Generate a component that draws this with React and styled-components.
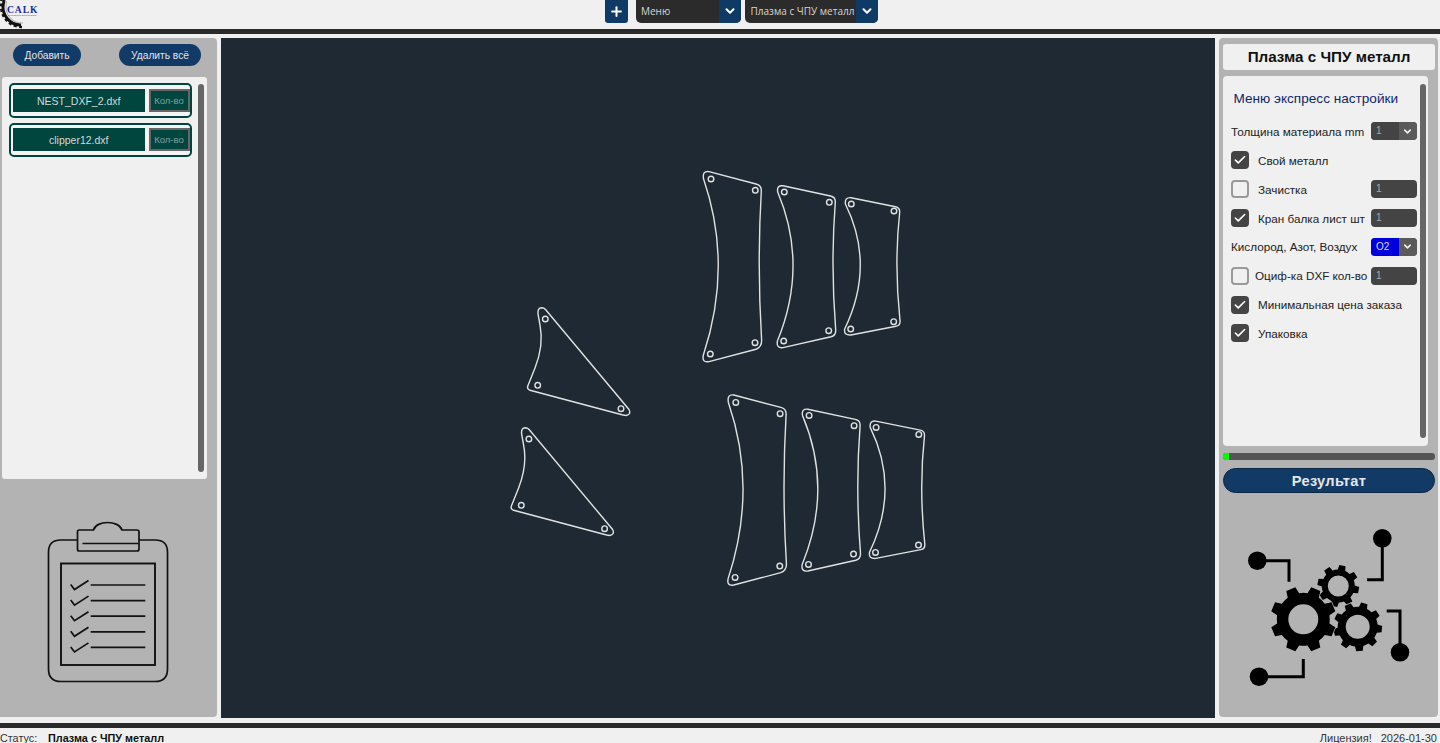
import React from "react";
import styled, { createGlobalStyle } from "styled-components";
import { Check, ChevronDown, Plus } from "lucide-react";

const Global = createGlobalStyle`
  html, body { margin: 0; padding: 0; background: #f0f0f0; }
  body { font-family: "Liberation Sans", Arial, sans-serif; overflow: hidden; }
  * { box-sizing: border-box; }
`;

const Page = styled.div`
  width: 1440px; height: 743px; overflow: hidden; display: flex; flex-direction: column; background: #f0f0f0;
`;
const Header = styled.header`
  position: relative; height: 29px; flex: none; display: flex; justify-content: center; gap: 7.5px; padding-left: 43px; background: #f0f0f0;
`;
const Rule = styled.div`
  height: 5px; flex: none; background: #2a2a2a;
`;
const LogoBox = styled.div`
  position: absolute; left: 0; top: 0; width: 44px; height: 29px;
`;
const PlusButton = styled.button`
  width: 23px; height: 22.5px; padding: 0; border: 0; border-radius: 0 0 3px 3px; background: #0f3a66; color: #fff; display: flex; align-items: center; justify-content: center;
`;
const TopGroup = styled.div`
  display: flex; gap: 4px;
`;
const TopSelect = styled.div`
  width: ${p => p.$w}px; height: 22.5px; display: flex; border-radius: 0 0 5px 5px; overflow: hidden; background: #2b2b2b; color: #d6d6d6; font: 10px "Open Sans", sans-serif;
`;
const TopValue = styled.div`
  flex: 1; min-width: 0; padding-left: 5.5px; line-height: 22px; white-space: nowrap;
`;
const TopArrow = styled.div`
  width: 22px; flex: none; background: #0f3a66; color: #fff; display: flex; align-items: center; justify-content: center;
`;
const Main = styled.main`
  margin-top: 4px; height: 680px; flex: none; display: grid; grid-template-columns: 217px 994px 219px; gap: 4px;
`;
const SidePanel = styled.aside`
  position: relative; background: #b3b3b3; border-radius: ${p => p.$right ? "4px" : "0 4px 4px 0"}; display: flex; flex-direction: column; height: 679px;
`;
const ActionRow = styled.div`
  height: 39px; flex: none; display: flex; justify-content: space-between; padding: 6px 16px 0 13px;
`;
const PillButton = styled.button`
  height: 22px; width: ${p => p.$w}px; padding: 0; border: 0; border-radius: 11px; background: #123a66; color: #e4e4e4; font: 10.2px "Liberation Sans", Arial, sans-serif;
`;
const FileCard = styled.div`
  position: relative; margin: 0 10px 0 2px; height: 402px; flex: none; background: #f0f0f0; border-radius: 3px; padding: 6px 0 0 7px; display: flex; flex-direction: column; gap: 5px;
`;
const ScrollThumb = styled.div`
  position: absolute; right: ${p => p.$r}px; top: ${p => p.$t}px; bottom: ${p => p.$t}px; width: 6px; border-radius: 3px; background: #666;
`;
const FileRow = styled.div`
  width: 183px; height: 34.5px; border: 2px solid #00443f; border-radius: 5px; background: #f4f4f4; display: flex; align-items: center; gap: 4px; padding-left: 2px;
`;
const FileName = styled.div`
  width: 131.5px; height: 23px; background: #00463f; color: #d0dad8; font-size: 10.5px; line-height: 24px; text-align: center;
`;
const QtyBox = styled.div`
  width: 41px; height: 23px; background: #00463f; border: 2px solid #666; color: #82a09b; font-size: 9.5px; line-height: 19px; text-align: center;
`;
const IconArea = styled.div`
  flex: 1; display: flex; justify-content: center; padding-top: ${p => p.$pt}px;
`;
const IconSvg = styled.svg`
  display: block; overflow: visible;
`;
const Canvas = styled.div`
  background: #1f2933; height: 680px;
`;
const CanvasSvg = styled.svg`
  display: block; width: 994px; height: 680px;
`;
const Title = styled.h1`
  margin: 6px 3px 6px 4px; height: 26px; flex: none; background: #f0f0f0; border-radius: 3px; font: bold 15.2px/26px "Liberation Sans", Arial, sans-serif; color: #111; text-align: center;
`;
const SettingsCard = styled.div`
  position: relative; margin-left: 4px; width: 205px; height: 370px; flex: none; background: #f0f0f0; border-radius: 4px; padding: 14px 0 0 8px;
`;
const SettingsHeading = styled.div`
  padding-left: 2.5px; height: 18px; font-size: 13.6px; line-height: 18px; color: #12276b; margin-bottom: 9px;
`;
const SettingRow = styled.div`
  height: 28.86px; display: flex; align-items: center; font-size: 11.7px; color: #222; white-space: nowrap;
`;
const Box = styled.div`
  width: 18px; height: 18px; flex: none; border-radius: 4px; margin-right: ${p => p.$mr}px; display: flex; align-items: center; justify-content: center; color: #fff;
  background: ${p => p.$on ? "#444" : "#f0f0f0"}; border: ${p => p.$on ? "0" : "2px solid #999"};
`;
const FieldSlot = styled.div`
  margin-left: auto; margin-right: 11.5px; width: 45.5px; height: 18px; flex: none; display: flex; border-radius: 4px; overflow: hidden; background: #444; color: #aaa; font-size: 10px; line-height: 17px;
`;
const FieldValue = styled.div`
  flex: 1; padding-left: 5px; background: ${p => p.$blue ? "#0000dd" : "#444"}; color: ${p => p.$blue ? "#ddd" : "#aaa"};
`;
const FieldArrow = styled.div`
  width: 18px; flex: none; background: #5a5a5a; color: #eee; display: flex; align-items: center; justify-content: center;
`;
const Progress = styled.div`
  margin: 7px 3px 0 4px; height: 7px; flex: none; background: #555; border-radius: 3px; overflow: hidden;
`;
const ProgressFill = styled.div`
  height: 100%; background: #00ff00;
`;
const ResultButton = styled.button`
  margin: 8px 3px 0 4px; height: 25px; flex: none; padding: 0; border: 1px solid #0a2744; border-radius: 12.5px; background: #123a66; color: #e6e6e6; font: bold 14.6px "Liberation Sans", Arial, sans-serif; letter-spacing: .3px;
`;
const BottomRule = styled(Rule)`
  margin-top: 5px;
`;
const Footer = styled.footer`
  flex: 1; display: flex; align-items: flex-start; padding: 4px 3px 0 0; font-size: 10.8px; line-height: 13px; color: #333; white-space: nowrap;
`;
const FooterLabel = styled.span`
  width: 48px;
`;
const FooterStatus = styled.span`
  font-weight: bold; font-size: 10.85px; color: #111;
`;
const FooterRight = styled.span`
  margin-left: auto; display: flex; gap: 9px; font-size: 11px;
`;

const gearPath = (cx, cy, tip, root, hole, teeth, rot) => {
  const pt = (r, a) => `${(cx + r * Math.cos(a)).toFixed(2)} ${(cy + r * Math.sin(a)).toFixed(2)}`;
  const step = (Math.PI * 2) / teeth;
  let d = "";
  for (let i = 0; i < teeth; i++) {
    const a = rot + i * step;
    const w = step * 0.3, t = step * 0.19;
    d += `${i ? "L" : "M"}${pt(root, a - w)} L${pt(tip, a - t)} L${pt(tip, a + t)} L${pt(root, a + w)} A${root} ${root} 0 0 1 ${pt(root, a + step - w)} `;
  }
  d += `Z M${cx + hole} ${cy} A${hole} ${hole} 0 1 0 ${cx - hole} ${cy} A${hole} ${hole} 0 1 0 ${cx + hole} ${cy} Z`;
  return d;
};

const Logo = () => (
  <LogoBox>
    <svg width="44" height="29" viewBox="0 0 44 29">
      <path d="M21 25 A18 18 0 0 1 3.5 3 L4 0" fill="none" stroke="#111" strokeWidth="3" />
      <path d="M22 27 A20.5 20.5 0 0 1 1.2 4 L1.4 0" fill="none" stroke="#111" strokeWidth="2.4" strokeDasharray="3 2.4" />
      <path d="M23 23 A16 16 0 0 1 6 6 L6.5 1" fill="none" stroke="#999" strokeWidth="0.8" />
      <text x="7" y="12.6" fontFamily="Liberation Serif, serif" fontWeight="bold" fontSize="9.6" letterSpacing="0.9" fill="#1a2aa0">CALK</text>
      <text x="8" y="16" fontFamily="Liberation Sans, sans-serif" fontSize="2.4" fill="#555">Professional Specifications</text>
    </svg>
  </LogoBox>
);

const TopDropdown = ({ w, children }) => (
  <TopSelect $w={w}>
    <TopValue>{children}</TopValue>
    <TopArrow><ChevronDown size={14} strokeWidth={3.5} /></TopArrow>
  </TopSelect>
);

const Clipboard = () => (
  <IconSvg width="122" height="162" viewBox="48 520 122 162" fill="none" stroke="#111" strokeWidth="1.7">
    <path d="M77.5 539 H61 Q48.5 539 48.5 551 V668 Q48.5 680.5 61 680.5 H155 Q167.5 680.5 167.5 668 V551 Q167.5 539 155 539 H139" />
    <path d="M79 529 H93.5 C96 519 119 519 122 529 H137 Q139 529 139 531 V548 Q139 550 137 550 H79 Q77.5 550 77.5 548 V531 Q77.5 529 79 529 Z" />
    <path d="M82.5 542.5 H138.5" />
    <rect x="61" y="562.5" width="94" height="101.5" strokeWidth="1.9" />
    {[0, 1, 2, 3, 4].map(i => (
      <g key={i} transform={`translate(0 ${i * 15.6})`}>
        <path d="M70.7 583.5 L74.5 588.5 L88.5 579.5" />
        <path d="M90.7 584 H145.3" />
      </g>
    ))}
  </IconSvg>
);

const Gears = () => (
  <IconSvg width="165" height="162" viewBox="1246 528 165 162">
    <g fill="none" stroke="#000" strokeWidth="3">
      <path d="M1257 560.7 H1289 V581.7" />
      <path d="M1382.3 538 V579.7 H1367" />
      <path d="M1400 652 V611 H1386.7" />
      <path d="M1259 676.7 H1303.3 V659" />
    </g>
    <g fill="#000">
      <circle cx="1257.3" cy="560.7" r="9.3" />
      <circle cx="1382.3" cy="538.3" r="9.3" />
      <circle cx="1400" cy="652.3" r="9.3" />
      <circle cx="1259" cy="676.7" r="9.3" />
    </g>
    <g fillRule="evenodd" fill="#000" stroke="#b3b3b3" strokeWidth="1.4" paintOrder="stroke">
      <path d={gearPath(1338.3, 586, 21, 16.5, 10.5, 8, 0.2)} />
      <path d={gearPath(1357.7, 626.7, 24.5, 20, 12, 9, 0.1)} />
      <path d={gearPath(1303.3, 619.3, 33, 26.5, 15, 8, Math.PI / 8)} />
    </g>
  </IconSvg>
);

const BLADE_L = "M709 171.6 L756 184 Q761.7 185.5 761.3 191 Q757 265 761.6 340 Q762 347 756 349.3 L709 361.6 Q701.5 363 703.4 355 Q733 265 703.6 179 Q702 170.5 709 171.6 Z";
const BLADE_M = "M783 185.8 L830.5 196 Q835.5 197 835.3 202 Q830.5 265 835.7 330 Q836 335.5 831 336.8 L783 347.6 Q776 348.5 777.4 341 Q808.5 265 777.7 192 Q776.5 185 783 185.8 Z";
const BLADE_S = "M851 197.7 L895.5 206.7 Q899.8 207.5 899.7 212 Q894 265 900 320.5 Q900.5 325.5 896 326.2 L851 335 Q843.5 335.5 844.7 329 Q875.5 265 845.4 204 Q844.5 197 851 197.7 Z";
const TRI = "M545.5 309.5 L629 409.5 Q631.5 414.5 626 415.5 Q625 415.5 622 414.8 L530 390.3 Q527 389.3 527.6 386.5 L535 368 Q544 345 540 325 L538 314 Q537.5 308 541.5 307.8 Q544 307.8 545.5 309.5 Z";

const Part = ({ d, holes, dx = 0, dy = 0 }) => (
  <g transform={`translate(${dx} ${dy})`}>
    <path d={d} />
    {holes.map(([x, y]) => <circle key={x + "-" + y} cx={x} cy={y} r="2.8" />)}
  </g>
);

const parts = [
  { d: BLADE_L, holes: [[711, 179], [755.3, 190.3], [755, 342.7], [710.3, 354]] },
  { d: BLADE_M, holes: [[784.3, 192], [829.3, 202.3], [828.7, 330.7], [783.7, 341]] },
  { d: BLADE_S, holes: [[851.3, 204], [894, 211], [893.7, 321.7], [850.7, 329]] },
];
const triHoles = [[545.3, 319], [537.7, 385.3], [621, 408.7]];

const Drawing = () => (
  <CanvasSvg viewBox="221 38 994 680" fill="none" stroke="#dfe2e2" strokeWidth="1.4">
    {parts.map(p => <Part key={p.d} {...p} />)}
    {parts.map(p => <Part key={p.d} {...p} dx={24.8} dy={223.4} />)}
    <Part d={TRI} holes={triHoles} />
    <Part d={TRI} holes={triHoles} dx={-16.4} dy={120} />
  </CanvasSvg>
);

const Toggle = ({ on, mr = 9 }) => (
  <Box $on={on} $mr={mr}>{on && <Check size={14} strokeWidth={2.8} />}</Box>
);
const NumberField = () => (
  <FieldSlot><FieldValue>1</FieldValue></FieldSlot>
);
const SelectField = ({ value, blue }) => (
  <FieldSlot>
    <FieldValue $blue={blue}>{value}</FieldValue>
    <FieldArrow><ChevronDown size={11} strokeWidth={3.5} /></FieldArrow>
  </FieldSlot>
);

export default function App() {
  return (
    <Page>
      <Global />
      <Header>
        <Logo />
        <PlusButton aria-label="Добавить"><Plus size={15} strokeWidth={3.2} /></PlusButton>
        <TopGroup>
          <TopDropdown w={105.5}>Меню</TopDropdown>
          <TopDropdown w={133}>Плазма с ЧПУ металл</TopDropdown>
        </TopGroup>
      </Header>
      <Rule />
      <Main>
        <SidePanel>
          <ActionRow>
            <PillButton $w={68}>Добавить</PillButton>
            <PillButton $w={82}>Удалить всё</PillButton>
          </ActionRow>
          <FileCard>
            <FileRow><FileName>NEST_DXF_2.dxf</FileName><QtyBox>Кол-во</QtyBox></FileRow>
            <FileRow><FileName>clipper12.dxf</FileName><QtyBox>Кол-во</QtyBox></FileRow>
            <ScrollThumb $r={3} $t={7} />
          </FileCard>
          <IconArea $pt={42}><Clipboard /></IconArea>
        </SidePanel>
        <Canvas><Drawing /></Canvas>
        <SidePanel $right>
          <Title>Плазма с ЧПУ металл</Title>
          <SettingsCard>
            <SettingsHeading>Меню экспресс настройки</SettingsHeading>
            <SettingRow>Толщина материала mm<SelectField value="1" /></SettingRow>
            <SettingRow><Toggle on />Свой металл</SettingRow>
            <SettingRow><Toggle />Зачистка<NumberField /></SettingRow>
            <SettingRow><Toggle on />Кран балка лист шт<NumberField /></SettingRow>
            <SettingRow>Кислород, Азот, Воздух<SelectField value="O2" blue /></SettingRow>
            <SettingRow><Toggle mr={6} />Оциф-ка DXF кол-во<NumberField /></SettingRow>
            <SettingRow><Toggle on />Минимальная цена заказа</SettingRow>
            <SettingRow><Toggle on />Упаковка</SettingRow>
            <ScrollThumb $r={2} $t={8} />
          </SettingsCard>
          <Progress><ProgressFill style={{ width: "3%" }} /></Progress>
          <ResultButton>Результат</ResultButton>
          <IconArea $pt={35}><Gears /></IconArea>
        </SidePanel>
      </Main>
      <BottomRule />
      <Footer>
        <FooterLabel>Статус:</FooterLabel>
        <FooterStatus>Плазма с ЧПУ металл</FooterStatus>
        <FooterRight><span>Лицензия!</span><span>2026-01-30</span></FooterRight>
      </Footer>
    </Page>
  );
}
